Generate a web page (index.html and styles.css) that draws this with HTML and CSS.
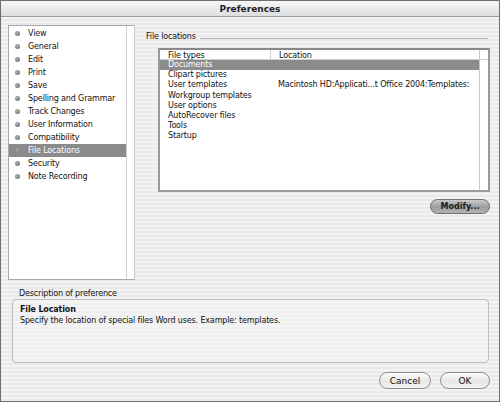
FILE: index.html
```html
<!DOCTYPE html>
<html>
<head>
<meta charset="utf-8">
<link rel="stylesheet" href="styles.css">
</head>
<body>
<div class="window">
  <div class="titlebar">Preferences</div>
  <div class="content">
    <div class="top">
      <div class="sidebar">
        <ul class="cats">
          <li><span class="dot"></span>View</li>
          <li><span class="dot"></span>General</li>
          <li><span class="dot"></span>Edit</li>
          <li><span class="dot"></span>Print</li>
          <li><span class="dot"></span>Save</li>
          <li><span class="dot"></span>Spelling and Grammar</li>
          <li><span class="dot"></span>Track Changes</li>
          <li><span class="dot"></span>User Information</li>
          <li><span class="dot"></span>Compatibility</li>
          <li class="sel"><span class="dot"></span>File Locations</li>
          <li><span class="dot"></span>Security</li>
          <li><span class="dot"></span>Note Recording</li>
        </ul>
        <div class="vscroll"></div>
      </div>
      <div class="main">
        <div class="group-label"><span>File locations</span><span class="rule"></span></div>
        <div class="table">
          <div class="tbody">
            <div class="thead">
              <div class="c1">File types</div>
              <div class="c2">Location</div>
            </div>
            <div class="row sel"><div class="c1">Documents</div><div class="c2"></div></div>
            <div class="row"><div class="c1">Clipart pictures</div><div class="c2"></div></div>
            <div class="row"><div class="c1">User templates</div><div class="c2">Macintosh HD:Applicati...t Office 2004:Templates:</div></div>
            <div class="row"><div class="c1">Workgroup templates</div><div class="c2"></div></div>
            <div class="row"><div class="c1">User options</div><div class="c2"></div></div>
            <div class="row"><div class="c1">AutoRecover files</div><div class="c2"></div></div>
            <div class="row"><div class="c1">Tools</div><div class="c2"></div></div>
            <div class="row"><div class="c1">Startup</div><div class="c2"></div></div>
          </div>
          <div class="tscroll"><div class="corner"></div></div>
        </div>
        <div class="modify-row"><button class="btn modify">Modify...</button></div>
      </div>
    </div>
    <div class="desc-label">Description of preference</div>
    <div class="desc">
      <div class="desc-title">File Location</div>
      <div class="desc-text">Specify the location of special files Word uses. Example: templates.</div>
    </div>
    <div class="actions">
      <button class="btn pill">Cancel</button>
      <button class="btn pill ok">OK</button>
    </div>
  </div>
</div>
</body>
</html>
```
FILE: styles.css
```css
* { box-sizing: border-box; }
html, body { margin: 0; padding: 0; }
body {
  width: 500px;
  height: 402px;
  overflow: hidden;
  font-family: "DejaVu Sans", "Liberation Sans", sans-serif;
  font-size: 8px;
  letter-spacing: -0.15px;
  color: #111;
}
.window {
  width: 500px;
  height: 402px;
  border: 1px solid #6e6e6e;
  display: flex;
  flex-direction: column;
  background-color: #f1f1f1;
  background-image: repeating-linear-gradient(to bottom, #f3f3f3 0px, #f3f3f3 2px, #e9e9e9 2px, #e9e9e9 4px);
}
.titlebar {
  height: 16px;
  flex: none;
  text-align: center;
  font-weight: bold;
  font-size: 9px;
  letter-spacing: 0;
  line-height: 16px;
  color: #222;
  background: linear-gradient(to bottom, #f6f6f6, #dedede);
  border-bottom: 1px solid #9a9a9a;
}
.content {
  flex: 1;
  padding: 8px 9px 0 7px;
  display: flex;
  flex-direction: column;
}
.top {
  display: flex;
  height: 255px;
}
.sidebar {
  width: 127px;
  height: 255px;
  display: flex;
  background: #fff;
  border: 1px solid #a8a8a8;
  border-right-color: #c8c8c8;
}
.cats {
  list-style: none;
  margin: 0;
  padding: 1px 0 0 0;
  flex: 1;
}
.cats li {
  height: 13px;
  line-height: 13px;
  padding-left: 19px;
  position: relative;
  white-space: nowrap;
}
.cats li.sel {
  background: #8b8b8b;
  color: #fff;
}
.dot {
  position: absolute;
  left: 6px;
  top: 4px;
  width: 5px;
  height: 5px;
  border-radius: 50%;
  background: radial-gradient(circle at 40% 35%, #b0b0b0, #666);
}
.vscroll {
  width: 8px;
  border-left: 1px solid #cfcfcf;
  background: #fff;
}
.main {
  margin-left: 11px;
  flex: 1;
  display: flex;
  flex-direction: column;
}
.group-label {
  display: flex;
  align-items: center;
  height: 6px;
  margin-top: 9px;
  line-height: 6px;
}
.group-label .rule {
  flex: 1;
  height: 0;
  border-top: 1px solid #b5b5b5;
  margin-left: 4px;
  margin-right: 2px;
  margin-top: 3px;
}
.table {
  margin-top: 8px;
  margin-left: 12px;
  width: 332px;
  height: 144px;
  border: 2px solid #9a9a9a;
  border-top-color: #888;
  background: #fff;
  display: flex;
}
.tbody {
  flex: 1;
}
.thead {
  display: flex;
  height: 10px;
  line-height: 11px;
  border-bottom: 1px solid #cfcfcf;
}
.thead .c2 {
  border-left: 1px solid #cfcfcf;
}
.c1 {
  width: 110px;
  padding-left: 8px;
  white-space: nowrap;
}
.c2 {
  flex: 1;
  padding-left: 8px;
  white-space: nowrap;
}
.row {
  display: flex;
  height: 10.2px;
  line-height: 10.2px;
}
.row.sel {
  background: #8b8b8b;
  color: #fff;
}
.tscroll {
  width: 9px;
  border-left: 1px solid #c8c8c8;
  background: #fff;
}
.corner {
  height: 10px;
  border-bottom: 1px solid #cfcfcf;
}
.modify-row {
  display: flex;
  justify-content: flex-end;
  margin-top: 7px;
}
.btn {
  font-family: inherit;
  font-size: 8px;
  color: #111;
  margin: 0;
  padding: 0;
  cursor: default;
}
.modify {
  width: 60px;
  height: 15px;
  border-radius: 8px;
  border: 1px solid #6f6f6f;
  background: linear-gradient(to bottom, #c9c9c9, #9d9d9d 55%, #b4b4b4);
  font-weight: bold;
  color: #1a1a1a;
}
.desc-label {
  margin-top: 9px;
  margin-left: 11px;
  height: 9px;
  line-height: 9px;
}
.desc {
  margin-top: 1px;
  margin-left: 4px;
  width: 477px;
  height: 64px;
  border: 1px solid #bdbdbd;
  border-radius: 4px;
  padding: 5px 7px;
  background: rgba(245,245,245,0.5);
}
.desc-title {
  font-weight: bold;
  line-height: 10px;
}
.desc-text {
  line-height: 11px;
}
.actions {
  display: flex;
  justify-content: flex-end;
  gap: 9px;
  margin-top: 9px;
}
.pill {
  width: 52px;
  height: 17px;
  border-radius: 9px;
  border: 1px solid #8a8a8a;
  background: linear-gradient(to bottom, #fdfdfd, #e6e6e6 55%, #f4f4f4);
  font-size: 9px;
  letter-spacing: 0;
}
.pill.ok {
  width: 50px;
}
```
